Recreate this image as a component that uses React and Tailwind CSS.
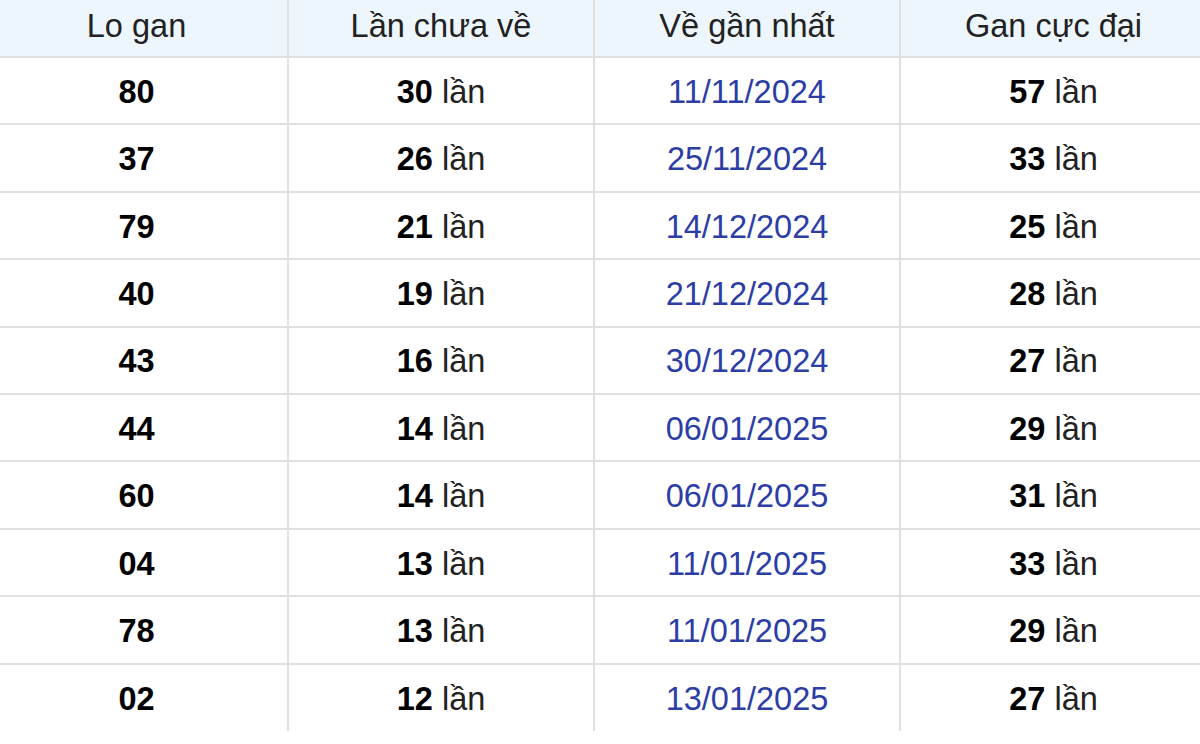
const rows = [
  { lo: "80", chua: 30, date: "11/11/2024", max: 57 },
  { lo: "37", chua: 26, date: "25/11/2024", max: 33 },
  { lo: "79", chua: 21, date: "14/12/2024", max: 25 },
  { lo: "40", chua: 19, date: "21/12/2024", max: 28 },
  { lo: "43", chua: 16, date: "30/12/2024", max: 27 },
  { lo: "44", chua: 14, date: "06/01/2025", max: 29 },
  { lo: "60", chua: 14, date: "06/01/2025", max: 31 },
  { lo: "04", chua: 13, date: "11/01/2025", max: 33 },
  { lo: "78", chua: 13, date: "11/01/2025", max: 29 },
  { lo: "02", chua: 12, date: "13/01/2025", max: 27 }
];

const headers = ["Lo gan", "Lần chưa về", "Về gần nhất", "Gan cực đại"];
const widths = ["w-[288px] pr-[14px]", "w-[306px]", "w-[306px]", "w-[300px] pl-[6px]"];

export default function App() {
  return (
    <div className="w-[1200px] h-[744px] bg-white overflow-hidden font-['Liberation_Sans',Arial,sans-serif]">
      <table className="w-[1200px] border-collapse table-fixed text-[32.5px] text-[#222]">
        <thead>
          <tr className="h-[57px] bg-[#eef6fd]">
            {headers.map((h, i) => (
              <th
                key={h}
                className={`${widths[i]} font-normal text-center pb-[4px] border-b-2 border-[#e0e0e0] ${i > 0 ? "border-l-2" : ""}`}
              >
                {h}
              </th>
            ))}
          </tr>
        </thead>
        <tbody>
          {rows.map((r, idx) => (
            <tr
              key={idx}
              className={`h-[67.4px] ${idx < rows.length - 1 ? "border-b-2 border-[#e0e0e0]" : ""}`}
            >
              <td className="text-center pr-[14px] pt-[3px] font-bold text-black">{r.lo}</td>
              <td className="text-center pt-[3px] border-l-2 border-[#e0e0e0]">
                <span className="font-bold text-black">{r.chua}</span> lần
              </td>
              <td className="text-center pt-[3px] border-l-2 border-[#e0e0e0] text-[#2c3ea5]">{r.date}</td>
              <td className="text-center pl-[6px] pt-[3px] border-l-2 border-[#e0e0e0]">
                <span className="font-bold text-black">{r.max}</span> lần
              </td>
            </tr>
          ))}
        </tbody>
      </table>
    </div>
  );
}
